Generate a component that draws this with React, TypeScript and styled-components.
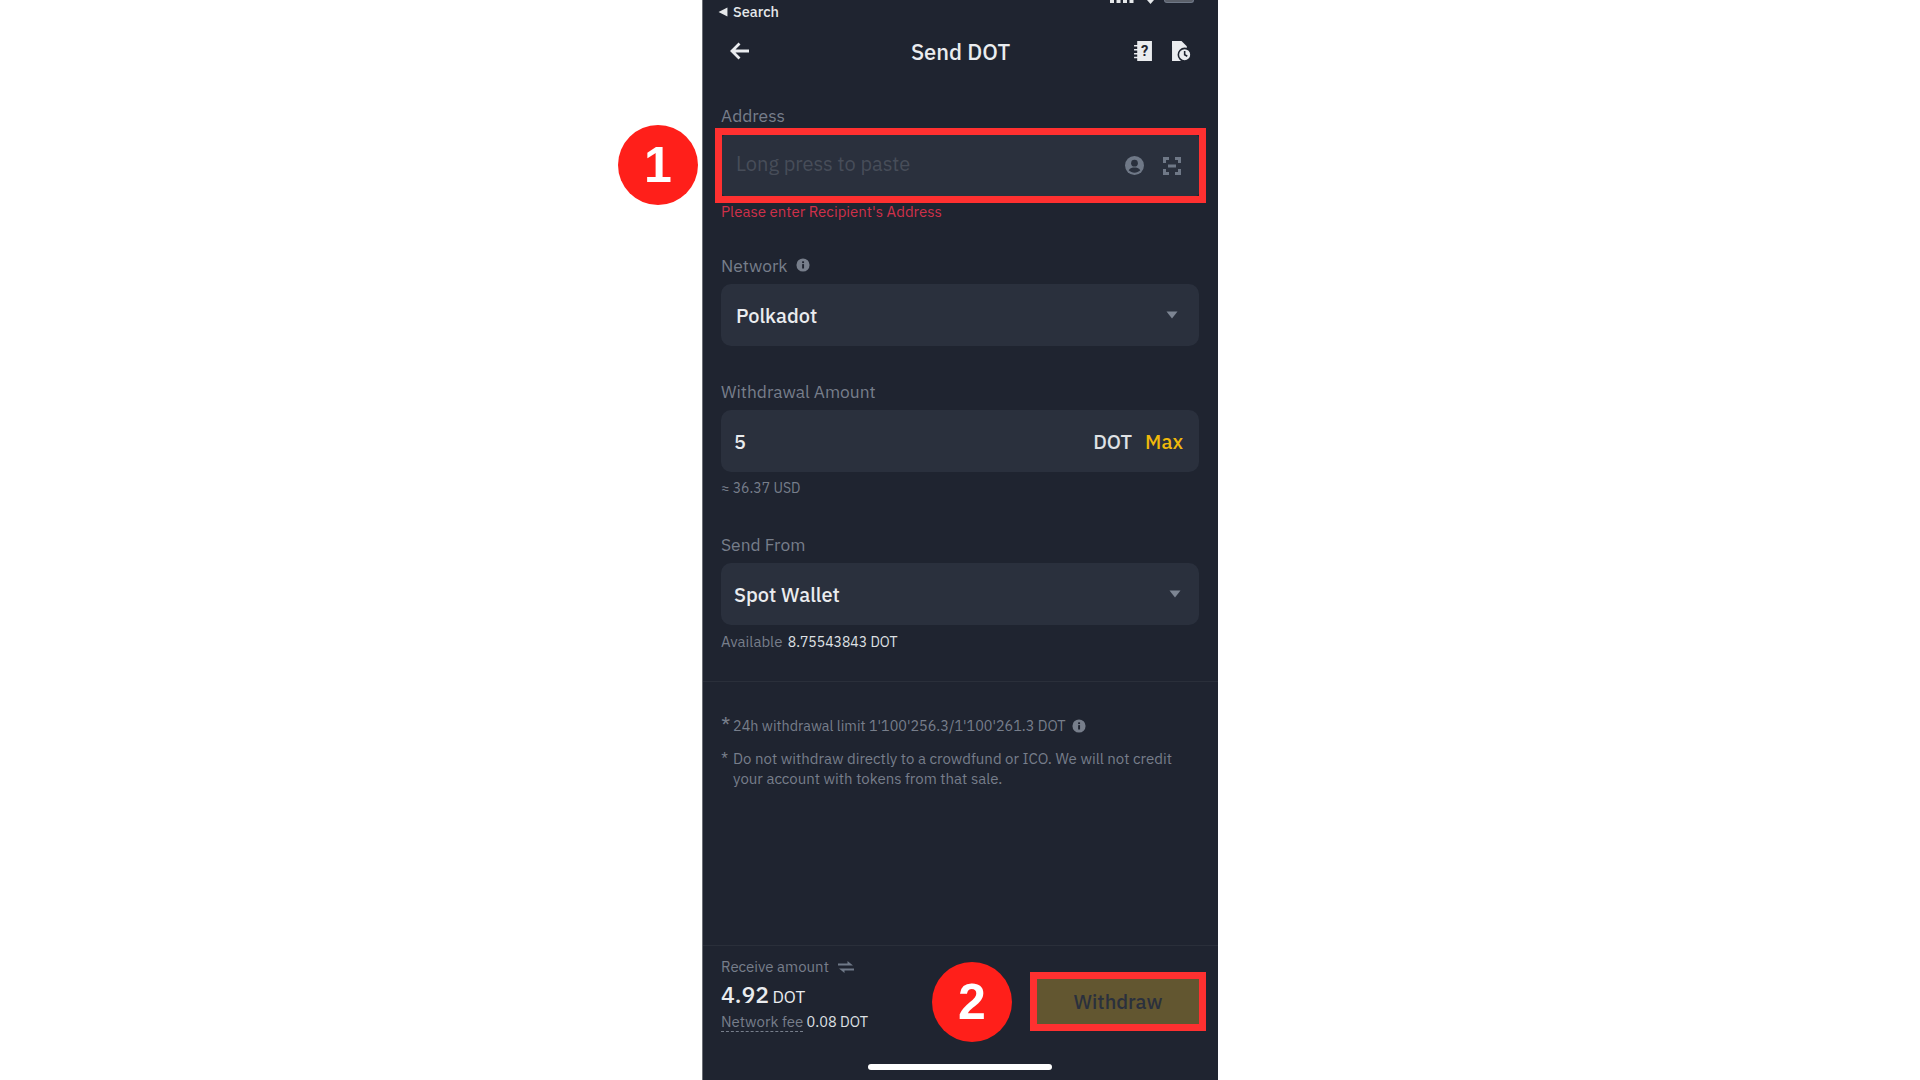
import styled, { createGlobalStyle, css } from "styled-components";

const GlobalStyle = createGlobalStyle`
  html, body {
    margin: 0;
    padding: 0;
    background: #fff;
  }
  * {
    box-sizing: border-box;
  }
`;

const InfoIcon = ({ size }: { size: number }) => (
  <svg width={size} height={size} viewBox="0 0 16 16">
    <circle cx="8" cy="8" r="7.5" fill="#777e8b" />
    <rect x="7" y="7" width="2.2" height="5" fill="#1f2430" />
    <rect x="7" y="3.8" width="2.2" height="2" fill="#1f2430" />
  </svg>
);

const Caret = () => (
  <svg width="12" height="8" viewBox="0 0 12 8">
    <path d="M0.5 0.5h11L6 7.5z" fill="#7d8593" />
  </svg>
);

function App() {
  return (
    <Page>
      <GlobalStyle />
      <Phone>
        <StatusBar>
          <SearchBack>
            <svg width="10" height="10" viewBox="0 0 9 9">
              <path d="M8.5 0.5v8L0.5 4.5z" fill="#e6e8ea" />
            </svg>
            Search
          </SearchBack>
          <StatusIcons>
            <svg width="24" height="3" viewBox="0 0 24 3">
              <path d="M0 0h4v3H0zM6.500 0h4v3h-4zM13 0h4v3h-4zM19.500 0h4v3h-4z" fill="#e6e8ea" />
            </svg>
            <svg width="7" height="4" viewBox="0 0 7 4">
              <path d="M0 0h7L3.500 4z" fill="#e6e8ea" />
            </svg>
            <Battery />
          </StatusIcons>
        </StatusBar>

        <Header>
          <svg width="20" height="18" viewBox="0 0 20 18" fill="none" stroke="#eaecef" strokeWidth="2.800">
            <path d="M19 9H2.500M9.500 1.500L2 9l7.500 7.500" />
          </svg>
          <Title>Send DOT</Title>
          <HeaderIcons>
            <svg width="18" height="20" viewBox="0 0 17 19">
              <path d="M3 0h14v19H3v-2.500H0V15h3v-2.200H0v-1.500h3V9H0V7.500h3V5.300H0V3.800h3z" fill="#eaecef" />
              <text x="10" y="14.500" fontSize="14" fontWeight="700" fontFamily="Roboto, sans-serif" textAnchor="middle" fill="#1f2430">?</text>
            </svg>
            <svg width="19" height="20" viewBox="0 0 18 19">
              <path d="M0 0h9l5 5v14H0z" fill="#eaecef" />
              <circle cx="12" cy="13" r="6" fill="#eaecef" stroke="#1f2430" strokeWidth="1.500" />
              <path d="M12 9.500V13l2.500 1.500" fill="none" stroke="#1f2430" strokeWidth="1.500" />
            </svg>
          </HeaderIcons>
        </Header>

        <Form>
          <FormGroup $bottom={33}>
            <Label>Address</Label>
            <Field $highlighted $height={63}>
              <Badge $left={-103} $top={-9}>1</Badge>
              <Placeholder>Long press to paste</Placeholder>
              <FieldIcons>
                <svg width="19" height="19" viewBox="0 0 18 18">
                  <circle cx="9" cy="9" r="9" fill="#6f7887" />
                  <circle cx="9" cy="6.800" r="3.200" fill="#2a303d" />
                  <path d="M3.500 13.500c1.500-2 3.500-2.500 5.500-2.500s4 .5 5.500 2.500C13 15 11 15.800 9 15.800S5 15 3.500 13.500z" fill="#2a303d" />
                </svg>
                <svg width="18" height="18" viewBox="0 0 18 18" fill="none" stroke="#6f7887" strokeWidth="3">
                  <path d="M1.500 6V1.500H6M12 1.500h4.500V6M16.500 12v4.500H12M6 16.500H1.500V12M5 9h8" />
                </svg>
              </FieldIcons>
            </Field>
            <ErrorText>Please enter Recipient's Address</ErrorText>
          </FormGroup>

          <FormGroup $bottom={34}>
            <Label>
              Network
              <InfoIcon size={14} />
            </Label>
            <Field>
              <FieldValue>Polkadot</FieldValue>
              <Caret />
            </Field>
          </FormGroup>

          <FormGroup $bottom={36}>
            <Label>Withdrawal Amount</Label>
            <Field $inset={13}>
              <FieldValue>5</FieldValue>
              <Suffix>
                <Unit>DOT</Unit>
                <MaxLink>Max</MaxLink>
              </Suffix>
            </Field>
            <Hint>≈ 36.37 USD</Hint>
          </FormGroup>

          <FormGroup $bottom={0}>
            <Label>Send From</Label>
            <Field $inset={13}>
              <FieldValue>Spot Wallet</FieldValue>
              <Caret />
            </Field>
            <Hint>
              <HintLabel>Available</HintLabel> <strong>8.75543843 DOT</strong>
            </Hint>
          </FormGroup>
        </Form>

        <Notes>
          <Note $size={14.4}>
            <Star $raised>*</Star>
            <NoteText>
              24h withdrawal limit 1'100'256.3/1'100'261.3 DOT
              <InfoIcon size={14} />
            </NoteText>
          </Note>
          <Note $size={15}>
            <Star>*</Star>
            <NoteText>
              Do not withdraw directly to a crowdfund or ICO. We will not credit your account with tokens from that sale.
            </NoteText>
          </Note>
        </Notes>

        <Footer>
          <Receive>
            <ReceiveLabel>
              Receive amount
              <svg width="16" height="12" viewBox="0 0 16 12" fill="#6f7887">
                <path d="M9.500 0L15 4.500H0V2.500h9.500zM6.500 12L1 7.500h15v2H6.500z" />
              </svg>
            </ReceiveLabel>
            <ReceiveValue>
              4.92 <small>DOT</small>
            </ReceiveValue>
            <FeeLine>
              <FeeLabel>Network fee</FeeLabel> 0.08 DOT
            </FeeLine>
          </Receive>
          <WithdrawButton>
            <Badge $left={-104} $top={-16}>2</Badge>
            Withdraw
          </WithdrawButton>
        </Footer>

        <HomeBar />
      </Phone>
    </Page>
  );
}

export default App;

// red marker frame drawn over a control, square while the control keeps its small radius
const markerFrame = css`
  &::after {
    content: "";
    position: absolute;
    inset: -6px;
    border: 7px solid #ff3030;
    pointer-events: none;
  }
`;

const Page = styled.div`
  display: flex;
  justify-content: center;
  width: 100%;
  height: 1080px;
  overflow: hidden;
  background: #fff;
  font-family: "IBM Plex Sans", "Noto Sans", sans-serif;
`;

const Phone = styled.div`
  display: flex;
  flex-direction: column;
  width: 516px;
  height: 1080px;
  background: #1f2430;
  border-left: 1px solid #6b6e75;
`;

const StatusBar = styled.div`
  display: flex;
  align-items: flex-start;
  justify-content: space-between;
  height: 22px;
  padding: 0 24px 0 15px;
`;

const SearchBack = styled.div`
  display: flex;
  align-items: center;
  gap: 5px;
  margin-top: 2px;
  color: #e6e8ea;
  font-size: 14.5px;
  font-weight: 500;
`;

const StatusIcons = styled.div`
  display: flex;
  align-items: flex-start;
  gap: 10px;

  svg:first-child {
    margin-right: 3px;
  }
`;

const Battery = styled.div`
  width: 30px;
  height: 3px;
  border: 1px solid #6f7887;
  border-top: none;
  border-radius: 0 0 3px 3px;
  background: #5b606a;
`;

const Header = styled.div`
  display: flex;
  align-items: center;
  justify-content: space-between;
  position: relative;
  height: 58px;
  padding: 0 27px 0 27px;
`;

const Title = styled.h1`
  position: absolute;
  left: 0;
  right: 0;
  margin: 0;
  text-align: center;
  color: #eaecef;
  font-size: 22px;
  font-weight: 500;
`;

const HeaderIcons = styled.div`
  display: flex;
  align-items: center;
  gap: 20px;
`;

const Form = styled.div`
  display: flex;
  flex-direction: column;
  height: 602px;
  padding: 24px 19px 0 18px;
  border-bottom: 1px solid #2a2f3a;
`;

const FormGroup = styled.div<{ $bottom: number }>`
  display: flex;
  flex-direction: column;
  margin-bottom: ${({ $bottom }) => $bottom}px;
`;

const Label = styled.div`
  display: flex;
  align-items: center;
  gap: 8px;
  height: 22px;
  margin-bottom: 8px;
  color: #777e8b;
  font-size: 17.4px;
`;

const Field = styled.div<{ $highlighted?: boolean; $height?: number; $inset?: number }>`
  display: flex;
  align-items: center;
  justify-content: space-between;
  position: relative;
  height: ${({ $height }) => $height ?? 62}px;
  padding: 0 ${({ $inset }) => ($inset ? 18 : 21)}px 0 ${({ $inset }) => $inset ?? 15}px;
  border-radius: 10px;
  background: #2a303d;
  ${({ $highlighted }) =>
    $highlighted &&
    css`
      margin-right: -1px;
      border-radius: 7px;
      ${markerFrame}
    `}
`;

const Placeholder = styled.span`
  margin-top: -4px;
  color: #474d59;
  font-size: 20px;
`;

const FieldIcons = styled.div`
  display: flex;
  align-items: center;
  gap: 19px;
  margin-right: -2px;
`;

const ErrorText = styled.div`
  margin-top: 5px;
  color: #cf304a;
  font-size: 15px;
`;

const FieldValue = styled.span`
  color: #eaecef;
  font-size: 20px;
  font-weight: 500;
`;

const Suffix = styled.div`
  display: flex;
  align-items: center;
  gap: 13px;
  margin-right: -2px;
  font-size: 20px;
  font-weight: 500;
`;

const Unit = styled.span`
  color: #dfe1e5;
`;

const MaxLink = styled.span`
  color: #f0b90b;
`;

const Hint = styled.div`
  margin-top: 7px;
  color: #777e8b;
  font-size: 14px;

  strong {
    margin-left: 2px;
    color: #dfe1e5;
    font-weight: 400;
  }
`;

const HintLabel = styled.span`
  font-size: 15px;
`;

const Notes = styled.div`
  display: flex;
  flex-direction: column;
  gap: 13px;
  height: 264px;
  padding: 34px 34px 0 18px;
  border-bottom: 1px solid #2a2f3a;
`;

const Note = styled.div<{ $size: number }>`
  display: flex;
  gap: 4px;
  color: #777e8b;
  font-size: ${({ $size }) => $size}px;
  line-height: 20px;
`;

const Star = styled.span<{ $raised?: boolean }>`
  flex: none;
  width: 8px;
  font-size: ${({ $raised }) => ($raised ? 21 : 16)}px;
  line-height: ${({ $raised }) => ($raised ? 16 : 20)}px;
`;

const NoteText = styled.div`
  display: block;

  svg {
    margin-left: 6px;
    vertical-align: -2px;
  }
`;

const Footer = styled.div`
  display: flex;
  align-items: flex-start;
  justify-content: space-between;
  padding: 11px 19px 0 18px;
`;

const Receive = styled.div`
  display: flex;
  flex-direction: column;
`;

const ReceiveLabel = styled.div`
  display: flex;
  align-items: center;
  gap: 9px;
  color: #777e8b;
  font-size: 15px;
  line-height: 20px;
`;

const ReceiveValue = styled.div`
  margin-top: 2px;
  color: #eaecef;
  font-size: 23px;
  font-weight: 500;
  line-height: 30px;

  small {
    margin-left: -2px;
    font-size: 17px;
    font-weight: 400;
  }
`;

const FeeLine = styled.div`
  color: #dfe1e5;
  font-size: 14.5px;
  line-height: 20px;
`;

const FeeLabel = styled.span`
  font-size: 15px;
  color: #777e8b;
  border-bottom: 1px dashed #777e8b;
`;

const WithdrawButton = styled.button`
  position: relative;
  width: 164px;
  height: 47px;
  margin: 21px -1px 0 0;
  border: none;
  border-radius: 4px;
  background: #625630;
  color: #2a303d;
  font-family: inherit;
  font-size: 20px;
  font-weight: 500;
  ${markerFrame}
`;

const Badge = styled.span<{ $left: number; $top: number }>`
  display: flex;
  align-items: center;
  justify-content: center;
  position: absolute;
  z-index: 1;
  left: ${({ $left }) => $left}px;
  top: ${({ $top }) => $top}px;
  width: 80px;
  height: 80px;
  border-radius: 50%;
  background: #ff1f1a;
  color: #fff;
  font-family: "Liberation Sans", Arial, sans-serif;
  font-size: 50px;
  font-weight: 700;
`;

const HomeBar = styled.div`
  width: 184px;
  height: 6px;
  margin: auto 0 10px 165px;
  border-radius: 3px;
  background: #fff;
`;
